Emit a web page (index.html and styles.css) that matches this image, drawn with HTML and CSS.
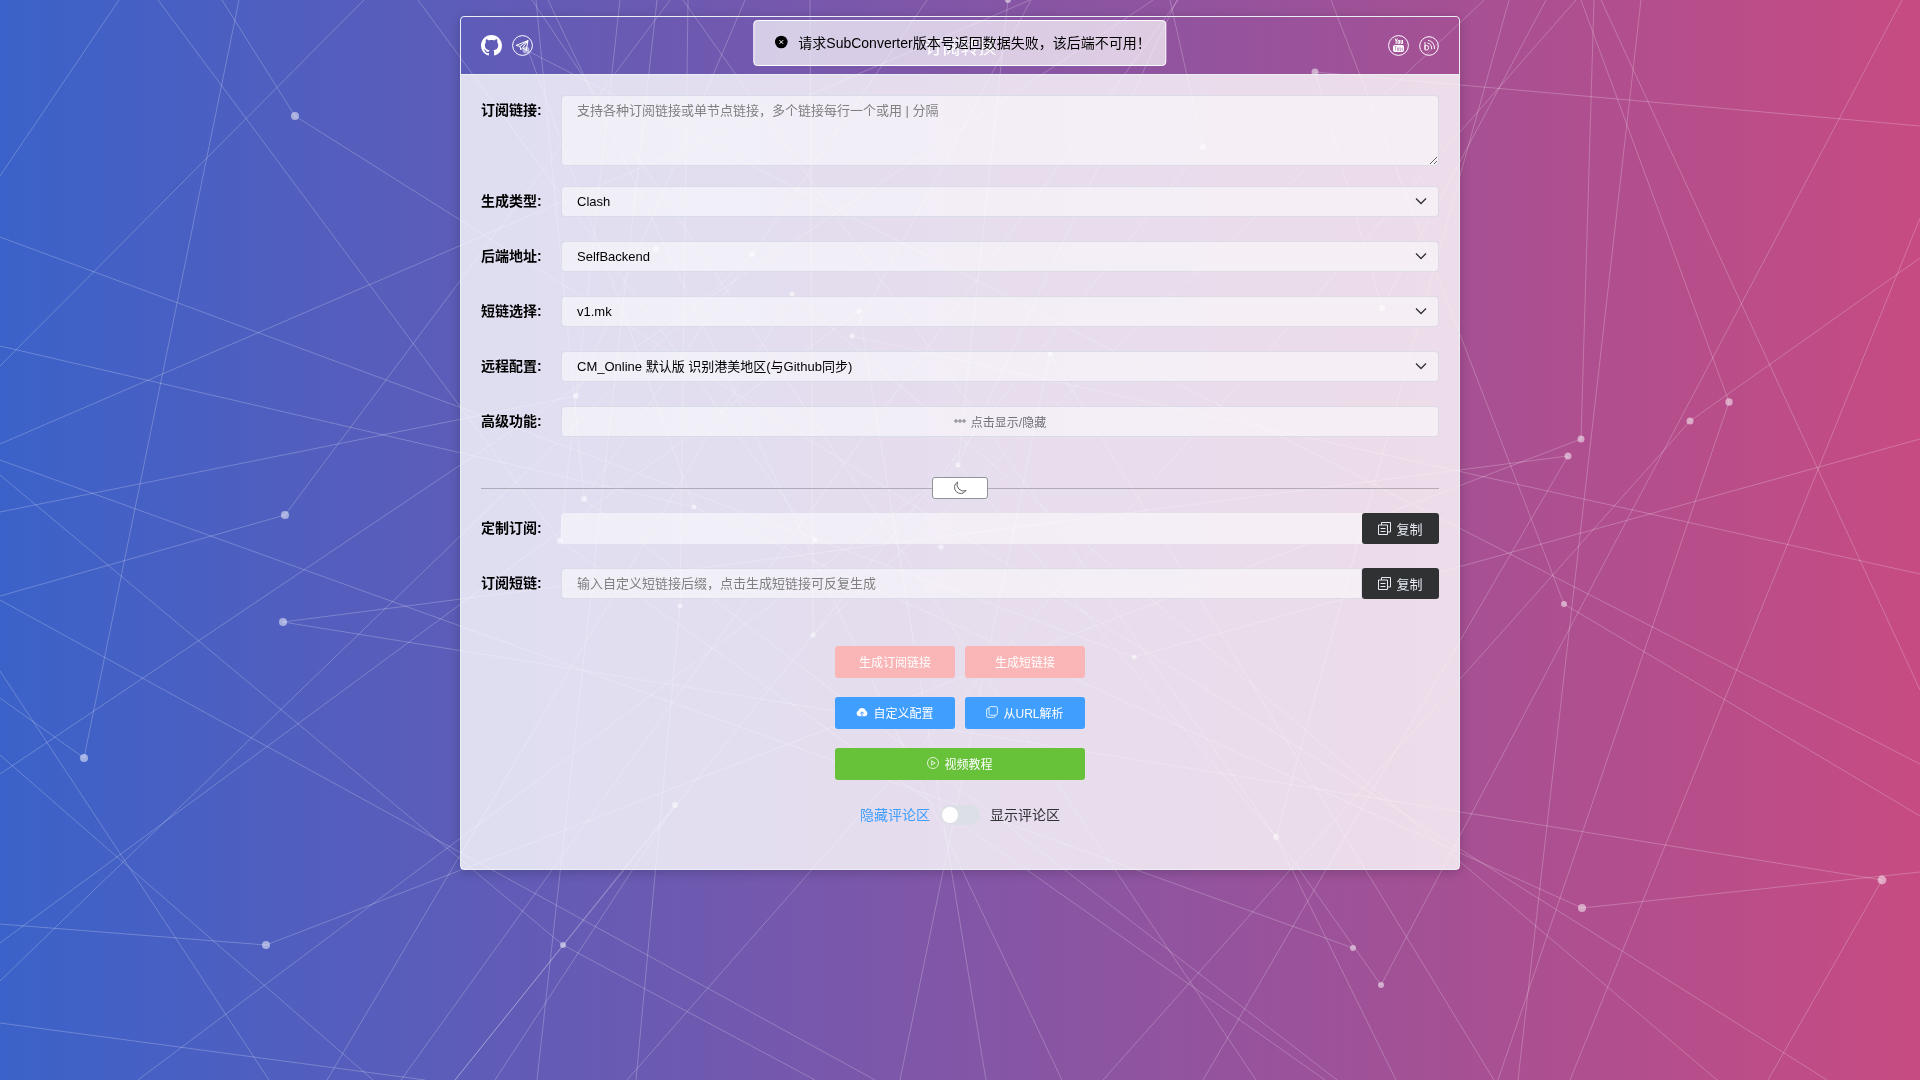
FILE: index.html
```html
<!DOCTYPE html>
<html lang="zh-CN">
<head>
    <meta charset="UTF-8">
    <meta name="viewport" content="width=device-width, initial-scale=1.0">
    <title>订阅转换</title>
    <link rel="stylesheet" href="styles.css">
</head>
<body>
    <!-- particle network -->
    <svg class="particles" viewBox="0 0 1920 1080" preserveAspectRatio="xMidYMid slice" aria-hidden="true">
        <path class="links" d="M119 0L0 176M158 0L560 541M222 0L295 116L1827 1080M239 0L84 758L0 698M364 0L0 366M0 237L1134 657L1920 439M0 346L694 507L1582 908L1920 872M0 444L1030 0M0 512L576 396M0 460L1353 948M0 475L563 945L815 1080M0 596L285 515L670 0M418 0L815 540M0 774L1153 0M0 981L752 254M0 943L859 311M1568 456L283 622L1882 880L1768 1080M0 600L875 1080M0 671L269 1080M0 755L373 1080M0 924L266 945L1581 439L1594 0M0 1023L425 1080M138 1080L958 465M327 1080L792 294M401 1080L1178 0M455 1080L813 635M455 1080L675 805L495 1080M657 0L537 1080M688 0L680 606L636 1080M810 0L813 635M536 0L584 499M620 0L560 541M532 0L1256 1080M548 0L1062 1080M528 50L694 507M526 50L1920 764M745 0L576 396M683 0L1381 985L1902 0M927 0L584 499M1008 0L958 465L1177 0M1031 0L852 336L1920 574M1170 0L1203 147L813 635M1920 126L1315 72L1382 308L1546 0M1331 0L1564 604L1920 816M1484 0L813 635M1509 0L1276 837L1396 1080M1276 837L958 465M1576 0L627 1080M1581 0L1729 402L1498 1080M1601 0L1920 690M1641 0L1518 1080M1920 218L1570 1080M1920 258L1690 421L1103 1080M1568 456L1203 1080M792 294L1717 1080M1050 354L1494 1080M560 541L1325 1080M584 499L1337 1080M859 311L986 1080M1050 354L900 1080"/>
        <g class="dots">
            <circle cx="295" cy="116" r="4"/><circle cx="285" cy="515" r="4"/><circle cx="283" cy="622" r="4"/>
            <circle cx="84" cy="758" r="4"/><circle cx="266" cy="945" r="4"/><circle cx="563" cy="945" r="3"/>
            <circle cx="1353" cy="948" r="3"/><circle cx="1381" cy="985" r="3"/><circle cx="1582" cy="908" r="4"/>
            <circle cx="1882" cy="880" r="4.4"/><circle cx="1564" cy="604" r="3"/><circle cx="1568" cy="456" r="3.5"/>
            <circle cx="1581" cy="439" r="3.5"/><circle cx="1690" cy="421" r="3.5"/><circle cx="1729" cy="402" r="3.7"/>
            <circle cx="1008" cy="0" r="3"/><circle cx="1203" cy="147" r="3"/><circle cx="656" cy="249" r="3"/>
            <circle cx="752" cy="254" r="3"/><circle cx="792" cy="294" r="2.5"/><circle cx="859" cy="311" r="2.5"/>
            <circle cx="852" cy="336" r="2.5"/><circle cx="1050" cy="354" r="2.5"/><circle cx="576" cy="396" r="3"/>
            <circle cx="958" cy="465" r="2.5"/><circle cx="584" cy="499" r="3"/><circle cx="694" cy="507" r="2.5"/>
            <circle cx="560" cy="541" r="3"/><circle cx="815" cy="540" r="2.5"/><circle cx="941" cy="547" r="2.5"/>
            <circle cx="680" cy="606" r="2.5"/><circle cx="813" cy="635" r="2.5"/><circle cx="1134" cy="657" r="2.5"/>
            <circle cx="675" cy="805" r="3"/><circle cx="1276" cy="837" r="3"/><circle cx="1382" cy="308" r="3"/>
            <circle cx="1315" cy="72" r="3.5"/><circle cx="526" cy="50" r="3.5"/>
        </g>
    </svg>

    <div class="message" role="alert">
        <svg class="message-icon" viewBox="0 0 14 14"><circle cx="7" cy="7" r="6.3"/><path d="M5.2 5.2l3.6 3.6M8.8 5.2L5.2 8.8"/></svg>
        <p>请求SubConverter版本号返回数据失败，该后端不可用！</p>
    </div>

    <main class="card">
        <header class="card-header">
            <div class="links-left">
                <a href="#" aria-label="GitHub">
                    <svg width="21" height="21" viewBox="0 0 16 16" fill="#fff"><path d="M8 0C3.58 0 0 3.58 0 8c0 3.54 2.29 6.53 5.47 7.59.4.07.55-.17.55-.38 0-.19-.01-.82-.01-1.49-2.01.37-2.53-.49-2.69-.94-.09-.23-.48-.94-.82-1.13-.28-.15-.68-.52-.01-.53.63-.01 1.08.58 1.23.82.72 1.21 1.87.87 2.33.66.07-.52.28-.87.51-1.07-1.78-.2-3.64-.89-3.64-3.95 0-.87.31-1.59.82-2.15-.08-.2-.36-1.02.08-2.12 0 0 .67-.21 2.2.82.64-.18 1.32-.27 2-.27s1.36.09 2 .27c1.53-1.04 2.2-.82 2.2-.82.44 1.1.16 1.92.08 2.12.51.56.82 1.27.82 2.15 0 3.07-1.87 3.75-3.65 3.95.29.25.54.73.54 1.48 0 1.07-.01 1.93-.01 2.2 0 .21.15.46.55.38A8.01 8.01 0 0 0 16 8c0-4.42-3.58-8-8-8z"/></svg>
                </a>
                <a href="#" aria-label="Telegram">
                    <svg width="21" height="21" viewBox="0 0 21 21" fill="none" stroke="#fff"><circle cx="10.5" cy="10.5" r="9.9"/><path stroke-linejoin="round" d="M4 10.4L16 5.6l-1.8 9.8-3.600-2.600-1.800 2-.8-3.400zM8 11.400L16 5.600l-5.400 7.200"/></svg>
                </a>
            </div>
            <h1>订阅转换</h1>
            <div class="links-right">
                <a href="#" aria-label="YouTube">
                    <svg width="21" height="21" viewBox="0 0 21 21" fill="none" stroke="#fff"><circle cx="10.5" cy="10.5" r="9.9"/><path d="M7 3.500l1.200 2.500v3M9.500 3.500L8.200 6M10 5.500h1.500v3H10zM13 5v3.500h1.500V5"/><rect x="5.500" y="10.500" width="10" height="6" rx="1" fill="#fff"/><path stroke="#9f539a" stroke-width=".5" d="M6.500 11.500h2M7.500 11.500v4M9.500 12.500v3h1v-3M12 11.500v4h1v-2.500M14.500 12.500v3"/></svg>
                </a>
                <a href="#" aria-label="Blog">
                    <svg width="20" height="20" viewBox="0 0 20 20" fill="none" stroke="#fff"><circle cx="10" cy="10" r="9.300"/><path d="M6 6v7M6 9.500h1.500a2 2 0 0 1 0 4.500H6zM8.500 7a5.500 5.500 0 0 1 4 6M9 4.500c4 0 6.500 4 6.500 8.500"/></svg>
                </a>
            </div>
        </header>

        <form class="card-body" onsubmit="return false">
            <div class="form-item">
                <label for="source">订阅链接:</label>
                <textarea id="source" placeholder="支持各种订阅链接或单节点链接，多个链接每行一个或用 | 分隔"></textarea>
            </div>
            <div class="form-item">
                <label for="client">生成类型:</label>
                <div class="select">
                    <select id="client"><option>Clash</option></select>
                    <svg viewBox="0 0 14 14"><path d="M2 4.500l5 5 5-5"/></svg>
                </div>
            </div>
            <div class="form-item">
                <label for="backend">后端地址:</label>
                <div class="select">
                    <select id="backend"><option>SelfBackend</option></select>
                    <svg viewBox="0 0 14 14"><path d="M2 4.500l5 5 5-5"/></svg>
                </div>
            </div>
            <div class="form-item">
                <label for="shortType">短链选择:</label>
                <div class="select">
                    <select id="shortType"><option>v1.mk</option></select>
                    <svg viewBox="0 0 14 14"><path d="M2 4.500l5 5 5-5"/></svg>
                </div>
            </div>
            <div class="form-item">
                <label for="remoteConfig">远程配置:</label>
                <div class="select">
                    <select id="remoteConfig"><option>CM_Online 默认版 识别港美地区(与Github同步)</option></select>
                    <svg viewBox="0 0 14 14"><path d="M2 4.500l5 5 5-5"/></svg>
                </div>
            </div>
            <div class="form-item">
                <label for="advanced">高级功能:</label>
                <button type="button" id="advanced" class="btn-advanced">
                    <svg width="12" height="12" viewBox="0 0 12 12" fill="none" stroke="currentColor"><circle cx="2" cy="6" r="1.200"/><circle cx="6" cy="6" r="1.200"/><circle cx="10" cy="6" r="1.200"/></svg>
                    点击显示/隐藏
                </button>
            </div>

            <div class="divider">
                <button type="button" class="btn-theme" aria-label="切换主题">
                    <svg width="14" height="14" viewBox="0 0 14 14" fill="none" stroke="#606266"><path stroke-linejoin="round" d="M4.500 1a6.200 6.200 0 1 0 8.500 8.500A6.500 6.500 0 0 1 4.500 1z"/></svg>
                </button>
            </div>

            <div class="form-item">
                <label for="customSub">定制订阅:</label>
                <div class="input-group">
                    <input type="text" id="customSub" class="plain" readonly>
                    <button type="button" class="btn-copy">
                        <svg width="13" height="13" viewBox="0 0 13 13"><path d="M3.500 3V.5h9v9.500H10M.5 3h9v9.500h-9zM2.500 6.500h5M2.500 9.500h5"/></svg>
                        复制
                    </button>
                </div>
            </div>
            <div class="form-item">
                <label for="shortSub">订阅短链:</label>
                <div class="input-group">
                    <input type="text" id="shortSub" placeholder="输入自定义短链接后缀，点击生成短链接可反复生成">
                    <button type="button" class="btn-copy">
                        <svg width="13" height="13" viewBox="0 0 13 13"><path d="M3.500 3V.5h9v9.500H10M.5 3h9v9.500h-9zM2.500 6.500h5M2.500 9.500h5"/></svg>
                        复制
                    </button>
                </div>
            </div>

            <div class="actions">
                <button type="button" class="btn btn-danger" disabled>生成订阅链接</button>
                <button type="button" class="btn btn-danger" disabled>生成短链接</button>
                <button type="button" class="btn btn-primary">
                    <svg width="12" height="12" viewBox="0 0 12 12"><path fill="#fff" d="M3 10.200A2.800 2.800 0 0 1 2.400 4.800a3.700 3.700 0 0 1 7.200 0A2.800 2.800 0 0 1 9 10.200z"/><path stroke="#409eff" fill="none" d="M6 10.500V6M4.200 7.500L6 5.800l1.800 1.700"/></svg>
                    自定义配置
                </button>
                <button type="button" class="btn btn-primary">
                    <svg width="12" height="12" viewBox="0 0 12 12" fill="none" stroke="#fff" stroke-width=".8"><rect x="3" y=".6" width="8.400" height="8.600" rx="1.500"/><path d="M3 2.500H2A1.500 1.500 0 0 0 .6 4v6A1.500 1.500 0 0 0 2 11.400h5.500A1.500 1.500 0 0 0 9 9.900v-.7"/></svg>
                    从URL解析
                </button>
                <button type="button" class="btn btn-success">
                    <svg width="12" height="12" viewBox="0 0 12 12" fill="none" stroke="#fff" stroke-width=".8"><circle cx="6" cy="6" r="5.500"/><path d="M4.600 3.800v4.400L8.200 6z"/></svg>
                    视频教程
                </button>
            </div>

            <div class="switch-row">
                <span class="switch-label active">隐藏评论区</span>
                <input type="checkbox" class="switch" id="comments">
                <label class="switch-label" for="comments">显示评论区</label>
            </div>
        </form>
    </main>
</body>
</html>
```

FILE: styles.css
```css
* {
    margin: 0;
    padding: 0;
    box-sizing: border-box;
}

body {
    min-height: 100vh;
    padding: 16px;
    font-family: "Liberation Sans", "Noto Sans CJK SC", sans-serif;
    font-size: 14px;
    color: #303133;
    background: linear-gradient(to right, #3b62c9, #8256a7 50%, #c74b82);
}

button, input, select, textarea {
    font-family: inherit;
}

.particles {
    position: fixed;
    inset: 0;
    width: 100%;
    height: 100%;
    z-index: -1;
}

.particles .links {
    fill: none;
    stroke: rgba(255, 255, 255, 0.23);
    stroke-width: 1;
}

.particles .dots {
    fill: #fff;
    fill-opacity: 0.5;
}

.message {
    position: fixed;
    top: 20px;
    left: 50%;
    transform: translateX(-50%);
    z-index: 10;
    display: flex;
    align-items: center;
    gap: 10px;
    height: 46px;
    padding: 0 15px 2px 20px;
    border: 1px solid #fff;
    border-radius: 4px;
    background: rgba(255, 255, 255, 0.7);
    color: #000;
    white-space: nowrap;
}

.message-icon {
    width: 14px;
    height: 14px;
    stroke: #fff;
}

.message-icon circle {
    fill: #000;
    stroke: none;
}

.card {
    max-width: 1000px;
    margin: 0 auto;
    border: 1px solid #ebeef5;
    border-radius: 4px;
    box-shadow: 0 2px 12px rgba(0, 0, 0, 0.2);
}

.card-header {
    display: flex;
    align-items: center;
    justify-content: space-between;
    height: 58px;
    padding: 0 20px;
    border-bottom: 1px solid #ebeef5;
}

.card-header h1 {
    font-size: 18px;
    font-weight: 400;
    color: #fff;
}

.links-left, .links-right {
    display: flex;
    align-items: center;
    gap: 10px;
}

.card-header a {
    display: flex;
}

.card-body {
    padding: 20px 20px 44px;
    background: rgba(255, 255, 255, 0.8);
}

.form-item {
    display: flex;
    align-items: flex-start;
    margin-bottom: 24px;
}

.form-item > label {
    flex: 0 0 80px;
    line-height: 31px;
    font-weight: 700;
    color: #000;
}

textarea, select, input[type="text"], .btn-advanced {
    display: block;
    width: 100%;
    height: 31px;
    padding: 0 15px 1px;
    border: 1px solid rgba(210, 218, 226, 0.6);
    border-radius: 4px;
    outline: none;
    background: rgba(255, 255, 255, 0.5);
    background-clip: padding-box;
    font-size: 13px;
    color: #000;
}

textarea {
    height: 71px;
    padding: 5px 15px;
    line-height: 20px;
    resize: vertical;
}

.form-item:first-child {
    margin-bottom: 20px;
}

::placeholder {
    color: #808080;
}

.select {
    position: relative;
    flex: 1;
}

select {
    appearance: none;
}

.select svg {
    position: absolute;
    top: 8px;
    right: 11px;
    width: 14px;
    height: 14px;
    fill: none;
    stroke: #303133;
    stroke-width: 1.3;
    pointer-events: none;
}

.btn-advanced {
    display: flex;
    align-items: center;
    justify-content: center;
    gap: 5px;
    font-size: 12px;
    color: #707078;
    cursor: pointer;
}

.divider {
    display: flex;
    align-items: center;
    margin: 40px 0 14px;
}

.divider::before, .divider::after {
    content: "";
    flex: 1;
    height: 1px;
    background: rgba(96, 98, 102, 0.4);
}

.btn-theme {
    display: flex;
    align-items: center;
    justify-content: center;
    width: 56px;
    height: 22px;
    border: 1px solid #909399;
    border-radius: 3px;
    background: #fff;
    cursor: pointer;
}

.input-group {
    display: flex;
    flex: 1;
}

.input-group input {
    flex: 1;
    border-radius: 4px 0 0 4px;
}

.input-group input.plain {
    border-color: transparent;
    background-clip: border-box;
}

.btn-copy {
    display: flex;
    align-items: center;
    justify-content: center;
    gap: 5px;
    width: 77px;
    height: 31px;
    padding-bottom: 1px;
    border: none;
    border-radius: 3px;
    background: #303133;
    color: #e5eaf3;
    font-size: 13px;
    cursor: pointer;
}

.btn-copy svg {
    fill: none;
    stroke: #e5eaf3;
}

.actions {
    display: grid;
    grid-template-columns: 120px 120px;
    justify-content: center;
    gap: 19px 10px;
    margin-top: 47px;
}

.btn {
    display: flex;
    align-items: center;
    justify-content: center;
    gap: 5px;
    height: 32px;
    padding-bottom: 2px;
    border: none;
    border-radius: 3px;
    color: #fff;
    font-size: 12px;
    cursor: pointer;
}

.btn-danger {
    background: #fab6b6;
}

.btn-primary {
    background: #409eff;
}

.btn-success {
    grid-column: span 2;
    background: #67c23a;
}

.switch-row {
    display: flex;
    align-items: center;
    justify-content: center;
    gap: 10px;
    margin-top: 25px;
}

.switch-label {
    line-height: 20px;
}

.switch-label.active {
    color: #409eff;
}

.switch {
    appearance: none;
    display: flex;
    align-items: center;
    width: 40px;
    height: 20px;
    padding: 0 2px;
    border-radius: 10px;
    background: #dcdfe6;
    cursor: pointer;
}

.switch::before {
    content: "";
    width: 16px;
    height: 16px;
    border-radius: 50%;
    background: #fff;
}

.switch:checked {
    justify-content: flex-end;
    background: #409eff;
}
```
